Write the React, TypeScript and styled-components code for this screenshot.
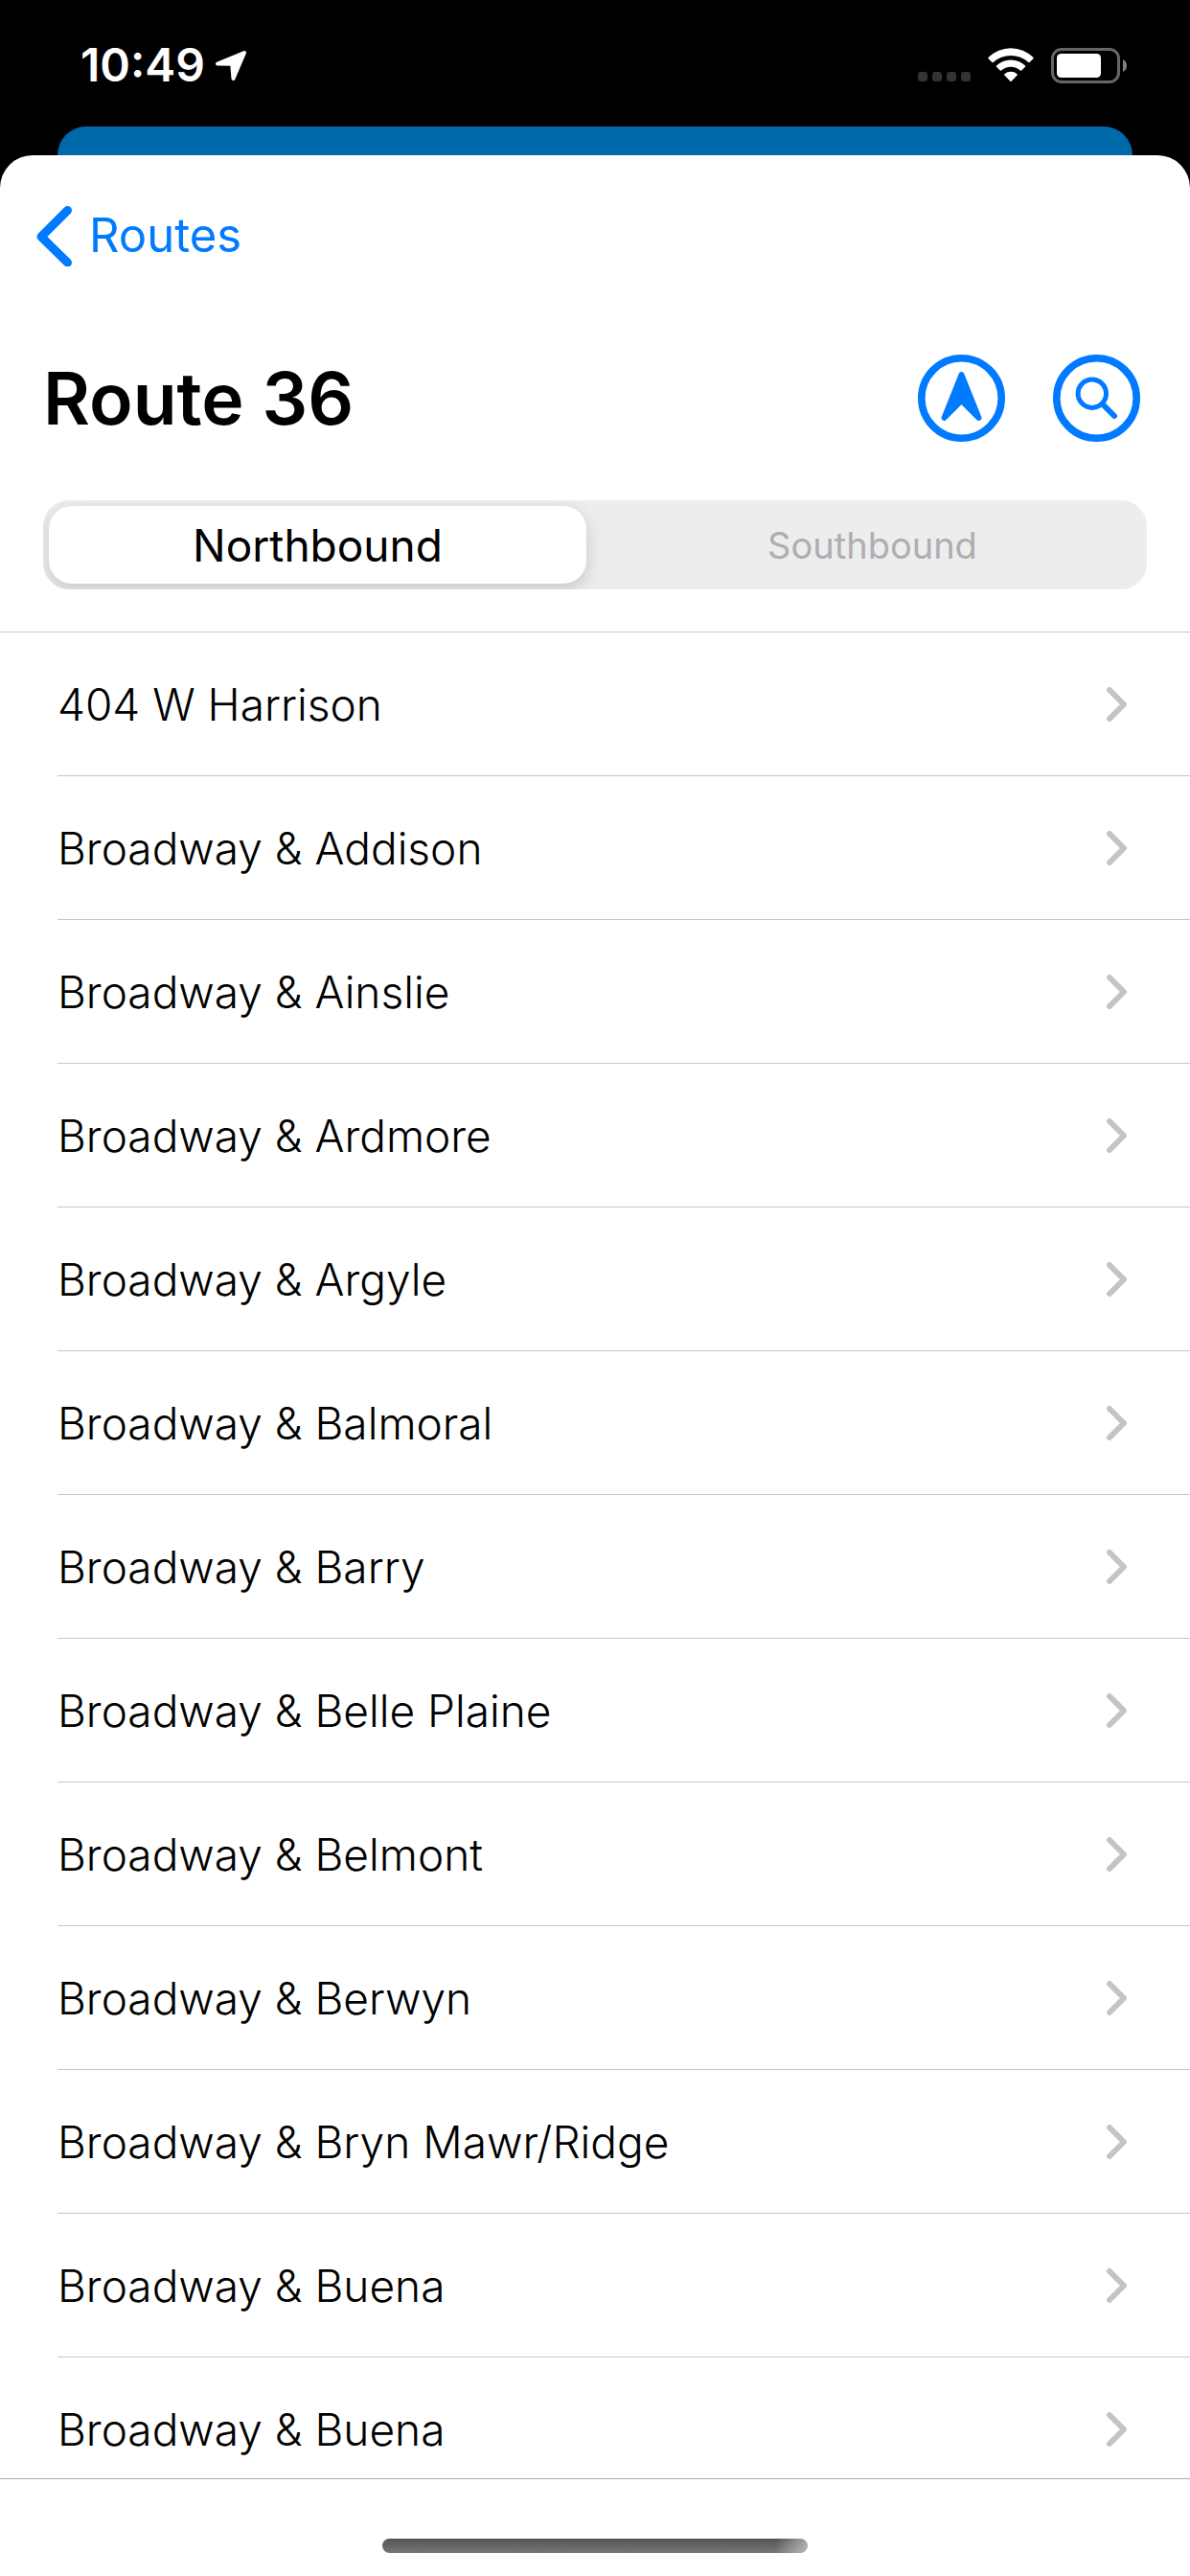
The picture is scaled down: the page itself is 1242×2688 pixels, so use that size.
import { useState } from 'react';
import styled, { createGlobalStyle } from 'styled-components';

const BLUE = '#007aff';
const HAIRLINE = '#c6c6c8';

const directions = ['Northbound', 'Southbound'];

const stops = [
  '404 W Harrison',
  'Broadway & Addison',
  'Broadway & Ainslie',
  'Broadway & Ardmore',
  'Broadway & Argyle',
  'Broadway & Balmoral',
  'Broadway & Barry',
  'Broadway & Belle Plaine',
  'Broadway & Belmont',
  'Broadway & Berwyn',
  'Broadway & Bryn Mawr/Ridge',
  'Broadway & Buena',
  'Broadway & Buena',
];

const GlobalStyle = createGlobalStyle`
  *, *::before, *::after {
    box-sizing: border-box;
  }

  body {
    margin: 0;
    background: #000;
    color: #000;
    font-family: Inter, 'Liberation Sans', sans-serif;
  }

  button {
    font: inherit;
  }

  svg {
    display: block;
    flex: none;
  }
`;

const Screen = styled.div`
  display: flex;
  flex-direction: column;
  height: 100vh;
`;

const StatusBar = styled.header`
  display: flex;
  align-items: flex-start;
  justify-content: space-between;
  height: 132px;
  padding: 38px 65px 0 84px;
  color: #fff;
`;

const StatusGroup = styled.div<{ $gap: number }>`
  display: flex;
  align-items: center;
  gap: ${({ $gap }) => $gap}px;
  height: 60px;
`;

const Clock = styled.time`
  font-size: 48px;
  font-weight: 600;
  line-height: 60px;
`;

const SignalDots = styled.div`
  display: flex;
  gap: 5px;
  padding-top: 24px;
`;

const Dot = styled.span`
  width: 10px;
  height: 10px;
  border-radius: 3px;
  background: #333;
`;

const CardBehind = styled.div`
  flex: none;
  height: 30px;
  margin: 0 60px;
  border-radius: 30px 30px 0 0;
  background: #0069aa;
`;

const Sheet = styled.main`
  display: flex;
  flex: 1;
  flex-direction: column;
  min-height: 0;
  overflow: hidden;
  border-radius: 34px 34px 0 0;
  background: #fff;
`;

const SheetHeader = styled.div`
  padding: 52px 45px 44px;
  border-bottom: 1px solid ${HAIRLINE};
`;

const BackLink = styled.a`
  display: flex;
  align-items: center;
  gap: 17px;
  width: fit-content;
  height: 64px;
  margin-left: -7px;
  color: ${BLUE};
  font-size: 49px;
  line-height: 64px;
  text-decoration: none;
`;

const TitleRow = styled.div`
  display: flex;
  align-items: center;
  justify-content: space-between;
  height: 91px;
  margin: 92px 7px 61px 0;
`;

const Title = styled.h1`
  margin: 0;
  font-size: 75px;
  font-weight: 600;
  line-height: 91px;
`;

const Actions = styled.div`
  display: flex;
  gap: 50px;
`;

const RoundButton = styled.button`
  padding: 0;
  border: 0;
  border-radius: 50%;
  background: none;
  color: ${BLUE};
  cursor: pointer;
`;

const Segmented = styled.fieldset`
  display: flex;
  gap: 18px;
  min-width: 0;
  margin: 0;
  padding: 6px;
  overflow: hidden;
  border: 0;
  border-radius: 27px;
  background: #ededed;
`;

const Segment = styled.label<{ $active: boolean }>`
  display: flex;
  flex: 1;
  align-items: center;
  justify-content: center;
  height: 81px;
  border-radius: 24px;
  background: ${({ $active }) => ($active ? '#fff' : 'transparent')};
  box-shadow: ${({ $active }) => ($active ? '0 6px 18px rgba(0, 0, 0, 0.16)' : 'none')};
  color: ${({ $active }) => ($active ? '#000' : '#aeaeb2')};
  font-size: ${({ $active }) => ($active ? 46 : 38)}px;
  cursor: pointer;
`;

const SegmentInput = styled.input`
  appearance: none;
  width: 0;
  height: 0;
  margin: 0;
`;

const StopList = styled.ul`
  flex: 1;
  min-height: 0;
  margin: 0;
  padding: 0;
  overflow-y: auto;
  list-style: none;
  scrollbar-width: none;
`;

const StopItem = styled.li`
  margin-left: 60px;
  border-bottom: 1px solid ${HAIRLINE};
`;

const StopLink = styled.a`
  display: flex;
  align-items: center;
  justify-content: space-between;
  height: 149px;
  padding-right: 65px;
  color: #000;
  font-size: 46px;
  font-weight: 300;
  text-decoration: none;
`;

const BottomBar = styled.footer`
  display: flex;
  flex: none;
  justify-content: center;
  height: 102px;
  padding-top: 62px;
  border-top: 1px solid #a9a9ab;
`;

const HomeIndicator = styled.div`
  width: 444px;
  height: 15px;
  border-radius: 8px;
  background:
    linear-gradient(100deg, transparent 92%, rgba(255, 255, 255, 0.5) 100%),
    linear-gradient(#555, #757575);
`;

function LocationIcon() {
  return (
    <svg width="34" height="34" viewBox="0 0 34 34" fill="currentColor" stroke="currentColor" strokeWidth="4" strokeLinejoin="round" aria-hidden="true">
      <path d="M3 15.5 31 4 19.5 31 18.2 15.8Z" />
    </svg>
  );
}

function WifiIcon() {
  return (
    <svg width="48" height="36" viewBox="0 0 48 36" fill="currentColor" aria-hidden="true">
      <path d="M.6 11.2Q0 10.5.7 9.8A33 33 0 0 1 47.3 9.8Q48 10.5 47.4 11.2L43.6 15Q43 15.600 42.400 15A27.500 27.500 0 0 0 5.600 15Q5 15.600 4.400 15Z" />
      <path d="M9 19.800Q8.400 19.200 9 18.600A21.500 21.500 0 0 1 39 18.600Q39.600 19.200 39 19.800L35.200 23.600Q34.600 24.200 34 23.600A15 15 0 0 0 14 23.600Q13.400 24.200 12.800 23.600Z" />
      <path d="M17.400 28.400Q16.800 27.800 17.400 27.200A10 10 0 0 1 30.600 27.200Q31.200 27.800 30.600 28.400L24.600 34.800Q24 35.400 23.400 34.800Z" />
    </svg>
  );
}

function BatteryIcon() {
  return (
    <svg width="80" height="37" viewBox="0 0 80 37" aria-hidden="true">
      <rect x="1.500" y="1.500" width="69" height="34" rx="9.500" fill="none" stroke="#666" strokeWidth="3" />
      <rect x="6" y="6" width="46" height="25" rx="4.500" fill="#fff" />
      <path d="M75 12q4 2 4 6.500T75 25Z" fill="#808080" />
    </svg>
  );
}

function BackIcon() {
  return (
    <svg width="38" height="64" viewBox="0 0 38 64" fill="none" stroke="currentColor" strokeWidth="9" strokeLinecap="round" strokeLinejoin="round" aria-hidden="true">
      <path d="M32.500 5.500 5 33 32.500 60" />
    </svg>
  );
}

function CompassIcon() {
  return (
    <svg width="91" height="91" viewBox="0 0 91 91" aria-hidden="true">
      <circle cx="45.500" cy="45.500" r="41.700" fill="none" stroke="currentColor" strokeWidth="7.600" />
      <path d="M45.500 21 63.500 66 45.500 48 27.500 66Z" fill="currentColor" stroke="currentColor" strokeWidth="6" strokeLinejoin="round" />
    </svg>
  );
}

function SearchIcon() {
  return (
    <svg width="91" height="91" viewBox="0 0 91 91" fill="none" stroke="currentColor" aria-hidden="true">
      <circle cx="45.500" cy="45.500" r="41.700" strokeWidth="7.600" />
      <circle cx="40.800" cy="40.700" r="14.700" strokeWidth="5" />
      <path d="M52 52 64 64" strokeWidth="6" strokeLinecap="round" />
    </svg>
  );
}

function DisclosureIcon() {
  return (
    <svg width="22" height="38" viewBox="0 0 22 38" fill="none" stroke="#c4c4c7" strokeWidth="6" strokeLinecap="round" strokeLinejoin="round" aria-hidden="true">
      <path d="M3 4 18 19 3 34" />
    </svg>
  );
}

export default function App() {
  const [direction, setDirection] = useState(directions[0]);

  return (
    <>
      <GlobalStyle />
      <Screen>
        <StatusBar>
          <StatusGroup $gap={10}>
            <Clock>10:49</Clock>
            <LocationIcon />
          </StatusGroup>
          <StatusGroup $gap={18}>
            <SignalDots>
              <Dot />
              <Dot />
              <Dot />
              <Dot />
            </SignalDots>
            <WifiIcon />
            <BatteryIcon />
          </StatusGroup>
        </StatusBar>
        <CardBehind />
        <Sheet>
          <SheetHeader>
            <BackLink href="#routes">
              <BackIcon />
              Routes
            </BackLink>
            <TitleRow>
              <Title>Route 36</Title>
              <Actions>
                <RoundButton type="button" aria-label="Nearest stop">
                  <CompassIcon />
                </RoundButton>
                <RoundButton type="button" aria-label="Search stops">
                  <SearchIcon />
                </RoundButton>
              </Actions>
            </TitleRow>
            <Segmented aria-label="Direction">
              {directions.map((name) => (
                <Segment key={name} $active={name === direction}>
                  <SegmentInput
                    type="radio"
                    name="direction"
                    value={name}
                    checked={name === direction}
                    onChange={() => setDirection(name)}
                  />
                  {name}
                </Segment>
              ))}
            </Segmented>
          </SheetHeader>
          <StopList>
            {stops.map((stop, index) => (
              <StopItem key={index}>
                <StopLink href={`#stop-${index}`}>
                  {stop}
                  <DisclosureIcon />
                </StopLink>
              </StopItem>
            ))}
          </StopList>
          <BottomBar>
            <HomeIndicator />
          </BottomBar>
        </Sheet>
      </Screen>
    </>
  );
}
